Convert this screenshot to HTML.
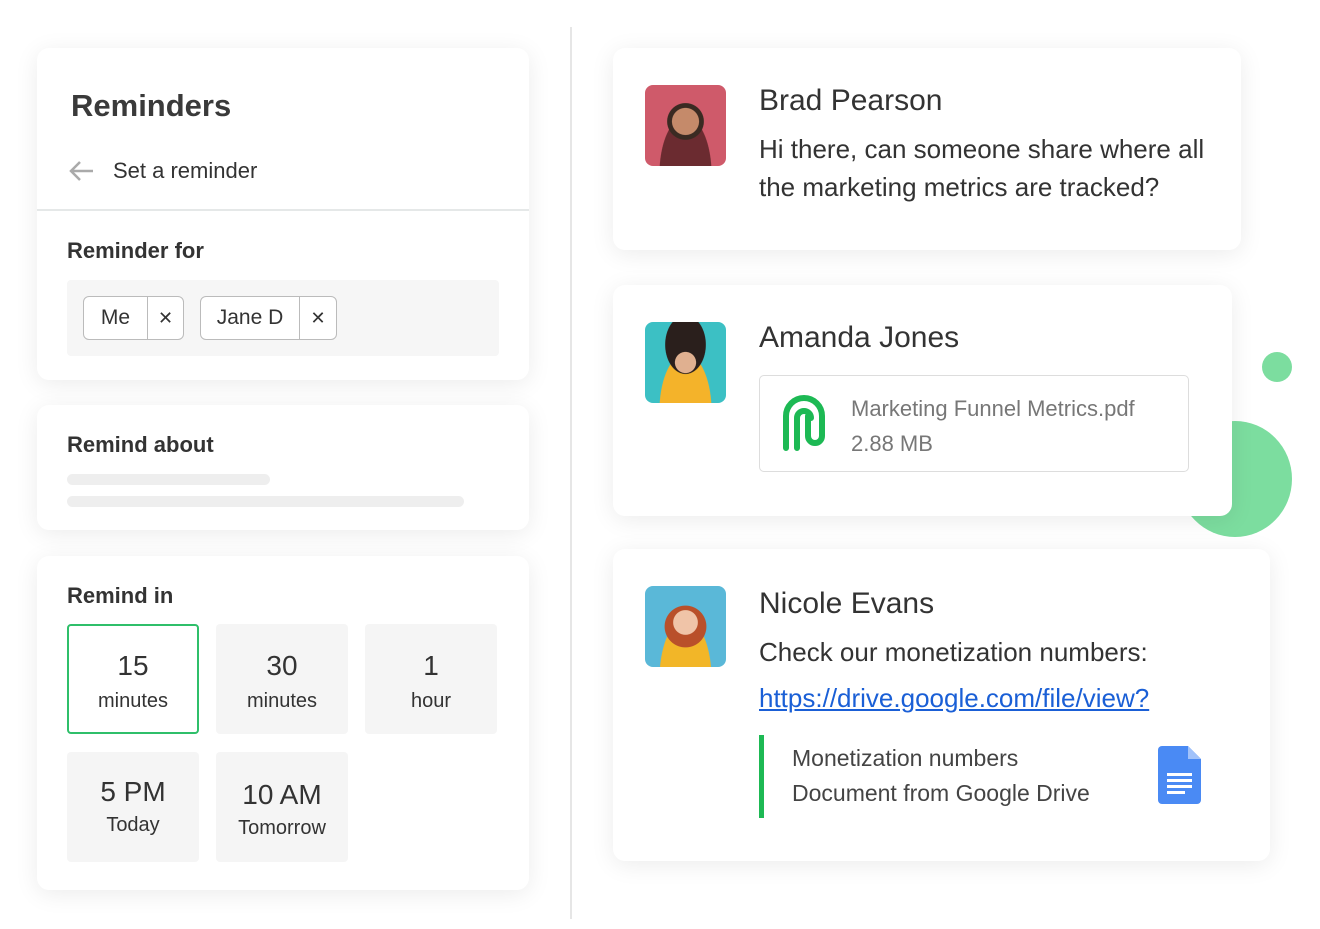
<!DOCTYPE html>
<html><head><meta charset="utf-8"><style>
*{margin:0;padding:0;box-sizing:border-box}
body{width:1320px;height:929px;background:#fff;font-family:"Liberation Sans",sans-serif;position:relative;overflow:hidden;color:#333}
.a{position:absolute}
.card{position:absolute;background:#fff;border-radius:12px;box-shadow:0 4px 24px rgba(0,0,0,.08)}
.t{position:absolute;white-space:nowrap}
.chip{position:absolute;height:44px;border:1px solid #bbb;border-radius:6px;background:#fff;font-size:21px;color:#333;display:flex}
.chip span{display:flex;align-items:center;justify-content:center}
.opt{position:absolute;width:132px;height:110px;background:#f5f5f5;border-radius:4px;text-align:center;color:#333}
.opt b{display:block;font-size:28px;font-weight:normal;margin-top:26px}
.opt i{display:block;font-style:normal;font-size:20px;margin-top:8px}
.av{position:absolute;left:32px;width:81px;height:81px;border-radius:8px;overflow:hidden}
.name{position:absolute;left:146px;font-size:30px;color:#333}
.msg{font-size:26px;color:#333}
</style></head><body>
<div class="a" style="left:570px;top:27px;width:2px;height:892px;background:#e6e6e6"></div>
<div class="a" style="left:1262px;top:352px;width:30px;height:30px;border-radius:50%;background:#7cdd9f"></div>
<div class="a" style="left:1178px;top:421px;width:114px;height:116px;border-radius:50%;background:#7cdd9f"></div>

<div class="card" style="left:37px;top:48px;width:492px;height:332px">
 <div class="t" style="left:34px;top:40px;font-size:31px;font-weight:bold;color:#3a3a3a">Reminders</div>
 <svg class="a" style="left:32px;top:112px" width="26" height="22" viewBox="0 0 26 22"><path d="M24 11H3M11 2 2 11l9 9" fill="none" stroke="#aaa" stroke-width="2.5"/></svg>
 <div class="t" style="left:76px;top:110px;font-size:22px;color:#333">Set a reminder</div>
 <div class="a" style="left:0;top:161px;width:492px;height:2px;background:#e5e8e8"></div>
 <div class="t" style="left:30px;top:190px;font-size:22px;font-weight:bold;color:#333">Reminder for</div>
 <div class="a" style="left:30px;top:232px;width:432px;height:76px;background:#f6f6f6;border-radius:4px"></div>
 <div class="chip" style="left:46px;top:248px;width:101px"><span style="width:64px;border-right:1px solid #bbb">Me</span><span style="flex:1;font-size:18px">✕</span></div>
 <div class="chip" style="left:163px;top:248px;width:137px"><span style="width:99px;border-right:1px solid #bbb">Jane D</span><span style="flex:1;font-size:18px">✕</span></div>
</div>

<div class="card" style="left:37px;top:405px;width:492px;height:125px">
 <div class="t" style="left:30px;top:27px;font-size:22px;font-weight:bold;color:#333">Remind about</div>
 <div class="a" style="left:30px;top:69px;width:203px;height:11px;border-radius:6px;background:#eee"></div>
 <div class="a" style="left:30px;top:91px;width:397px;height:11px;border-radius:6px;background:#eee"></div>
</div>

<div class="card" style="left:37px;top:556px;width:492px;height:334px">
 <div class="t" style="left:30px;top:27px;font-size:22px;font-weight:bold;color:#333">Remind in</div>
 <div class="opt" style="left:30px;top:68px;background:#fff;border:2px solid #2fbf6a"><b style="margin-top:24px">15</b><i>minutes</i></div>
 <div class="opt" style="left:179px;top:68px"><b>30</b><i>minutes</i></div>
 <div class="opt" style="left:328px;top:68px"><b>1</b><i>hour</i></div>
 <div class="opt" style="left:30px;top:196px"><b style="margin-top:24px">5 PM</b><i style="margin-top:6px">Today</i></div>
 <div class="opt" style="left:179px;top:196px"><b style="margin-top:27px">10 AM</b><i style="margin-top:6px">Tomorrow</i></div>
</div>

<div class="card" style="left:613px;top:48px;width:628px;height:202px">
 <div class="av" style="top:37px;background:radial-gradient(circle at 50% 45%,#c58a6a 0 22%,#3a2a22 23% 30%,transparent 31%),radial-gradient(ellipse at 50% 110%,#6b2b30 0 45%,transparent 46%),#cf5a6a"></div>
 <div class="name" style="top:36px">Brad Pearson</div>
 <div class="t msg" style="left:146px;top:82px;line-height:38px">Hi there, can someone share where all<br>the marketing metrics are tracked?</div>
</div>

<div class="card" style="left:613px;top:285px;width:619px;height:231px">
 <div class="av" style="top:37px;background:radial-gradient(circle at 50% 50%,#e0b090 0 18%,transparent 19%),radial-gradient(ellipse at 50% 28%,#2a1f1c 0 35%,transparent 36%),radial-gradient(ellipse at 50% 110%,#f4b32a 0 45%,transparent 46%),#3cc0c4"></div>
 <div class="name" style="top:36px">Amanda Jones</div>
 <div class="a" style="left:146px;top:90px;width:430px;height:97px;border:1.5px solid #ddd;border-radius:5px">
  <svg class="a" style="left:20px;top:18px" width="50" height="58" viewBox="0 0 50 58"><path d="M6 54V22a18 18 0 0 1 36 0v20a7 7 0 0 1-14 0V22" fill="none" stroke="#1db954" stroke-width="6" stroke-linecap="round"/><path d="M17 54V24a7 7 0 0 1 14 0" fill="none" stroke="#1db954" stroke-width="6" stroke-linecap="round"/></svg>
  <div class="t" style="left:91px;top:20px;font-size:22px;color:#777">Marketing Funnel Metrics.pdf</div>
  <div class="t" style="left:91px;top:55px;font-size:22px;color:#777">2.88 MB</div>
 </div>
</div>

<div class="card" style="left:613px;top:549px;width:657px;height:312px">
 <div class="av" style="top:37px;background:radial-gradient(circle at 50% 45%,#f0c4a8 0 20%,transparent 21%),radial-gradient(ellipse at 50% 50%,#b9502a 0 36%,transparent 37%),radial-gradient(ellipse at 50% 115%,#f2b628 0 45%,transparent 46%),#5ab8d8"></div>
 <div class="name" style="top:38px">Nicole Evans</div>
 <div class="t msg" style="left:146px;top:88px">Check our monetization numbers:</div>
 <div class="t msg" style="left:146px;top:134px;color:#1a5fd6;text-decoration:underline">https://drive.google.com/file/view?</div>
 <div class="a" style="left:146px;top:186px;width:5px;height:83px;background:#1db954"></div>
 <div class="t" style="left:179px;top:196px;font-size:23px;color:#444">Monetization numbers</div>
 <div class="t" style="left:179px;top:231px;font-size:23px;color:#444">Document from Google Drive</div>
 <svg class="a" style="left:545px;top:197px" width="43" height="58" viewBox="0 0 43 58"><path d="M4 0h26l13 13v41a4 4 0 0 1-4 4H4a4 4 0 0 1-4-4V4a4 4 0 0 1 4-4z" fill="#4a8af4"/><path d="M30 0v13h13z" fill="#a1c2fa"/><rect x="9" y="27" width="25" height="3" fill="#fff"/><rect x="9" y="33" width="25" height="3" fill="#fff"/><rect x="9" y="39" width="25" height="3" fill="#fff"/><rect x="9" y="45" width="18" height="3" fill="#fff"/></svg>
</div>
</body></html>
